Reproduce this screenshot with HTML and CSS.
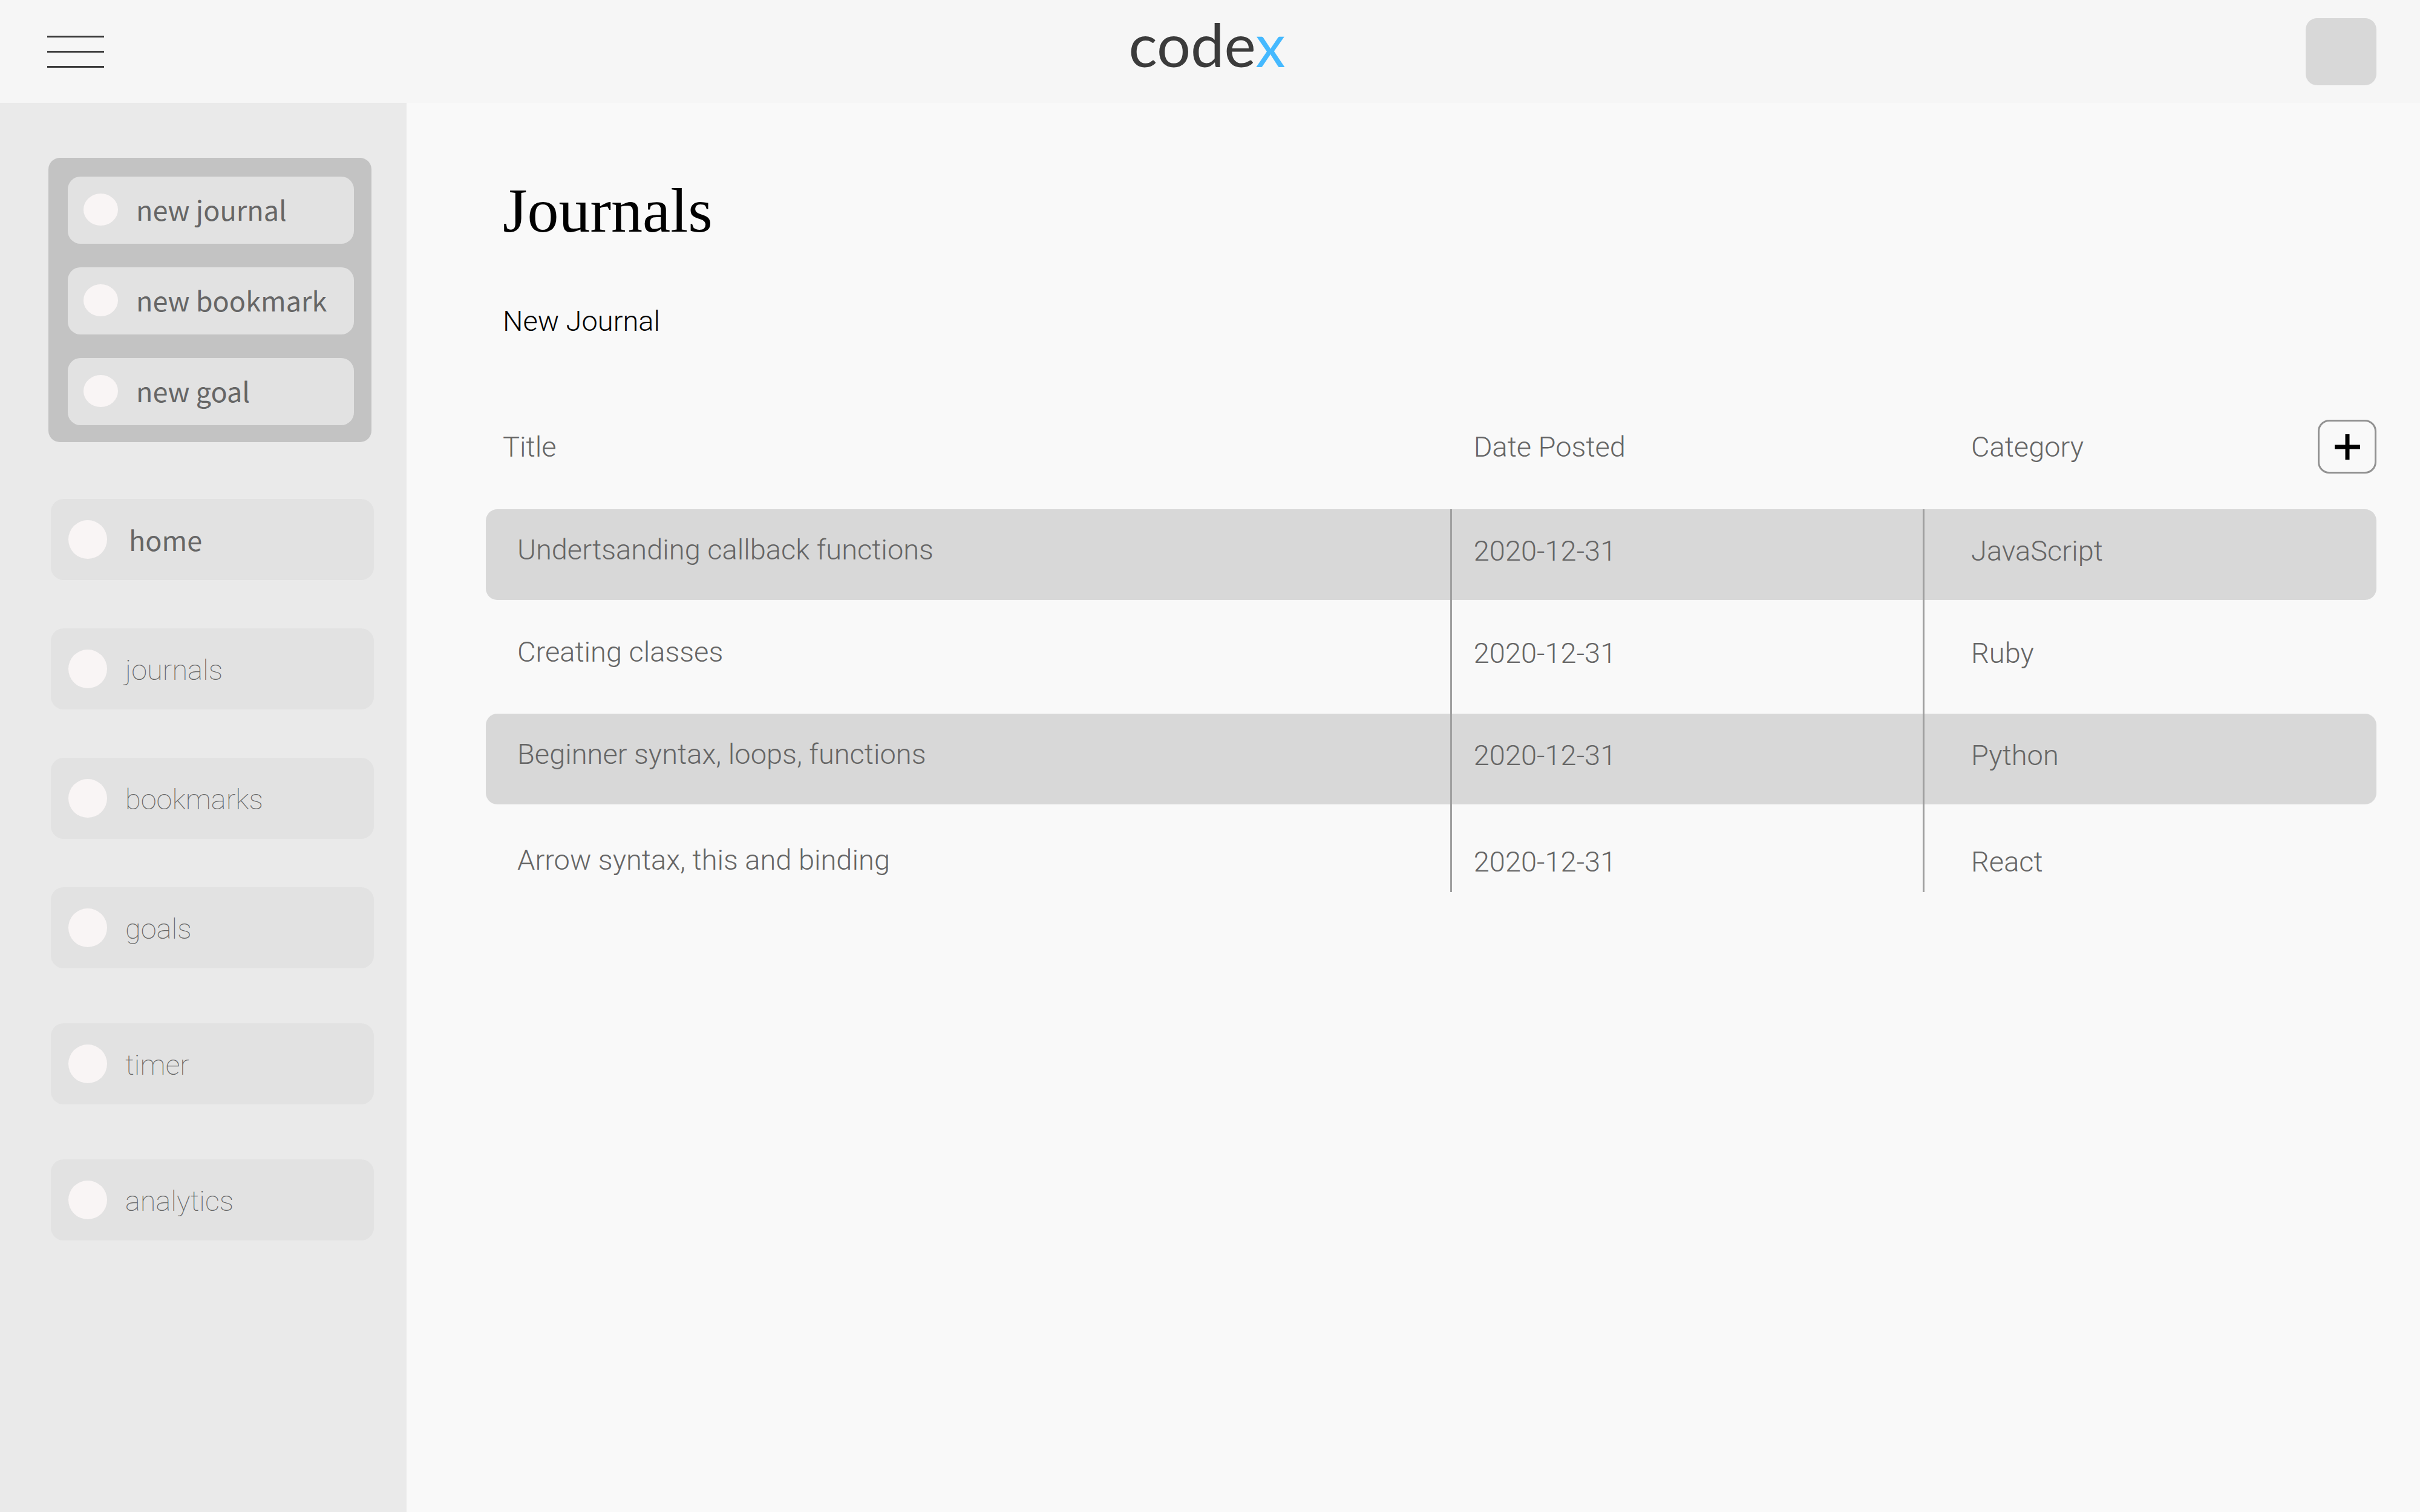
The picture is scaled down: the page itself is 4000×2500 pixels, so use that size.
FILE: index.html
```html
<!DOCTYPE html>
<html lang="en">
<head>
  <meta charset="utf-8">
  <meta name="viewport" content="width=device-width, initial-scale=1">
  <title>codex – Journals</title>
  <link rel="stylesheet" href="styles.css">
</head>
<body>
  <header class="topbar">
    <button class="menu-button" type="button" aria-label="Menu">
      <span class="menu-line"></span>
      <span class="menu-line"></span>
      <span class="menu-line"></span>
    </button>
    <a class="logo" href="#">code<span class="logo-accent">x</span></a>
    <button class="avatar" type="button" aria-label="Account"></button>
  </header>

  <div class="layout">
    <aside class="sidebar">
      <div class="quick-actions">
        <button class="quick-button" type="button"><span class="quick-dot"></span>new journal</button>
        <button class="quick-button" type="button"><span class="quick-dot"></span>new bookmark</button>
        <button class="quick-button" type="button"><span class="quick-dot"></span>new goal</button>
      </div>
      <nav class="nav">
        <a class="nav-item nav-item-current" href="#" aria-current="page"><span class="nav-dot"></span><span class="nav-label">home</span></a>
        <a class="nav-item" href="#"><span class="nav-dot"></span><span class="nav-label">journals</span></a>
        <a class="nav-item" href="#"><span class="nav-dot"></span><span class="nav-label">bookmarks</span></a>
        <a class="nav-item" href="#"><span class="nav-dot"></span><span class="nav-label">goals</span></a>
        <a class="nav-item nav-item-tool" href="#"><span class="nav-dot"></span><span class="nav-label">timer</span></a>
        <a class="nav-item nav-item-tool" href="#"><span class="nav-dot"></span><span class="nav-label">analytics</span></a>
      </nav>
    </aside>

    <main class="content">
      <h1 class="page-title">Journals</h1>
      <a class="new-link" href="#">New Journal</a>

      <table class="journal-table">
        <colgroup>
          <col class="col-title">
          <col class="col-date">
          <col class="col-category">
        </colgroup>
        <thead>
          <tr>
            <th scope="col">Title</th>
            <th scope="col">Date Posted</th>
            <th scope="col">
              <div class="head-with-action">
                Category
                <button class="add-button" type="button" aria-label="Add column">
                  <svg class="add-icon" viewBox="0 0 42 42" aria-hidden="true"><path d="M21 0v42M0 21h42" stroke="#000" stroke-width="7"/></svg>
                </button>
              </div>
            </th>
          </tr>
        </thead>
        <tbody>
          <tr class="row-shaded"><td>Undertsanding callback functions</td><td>2020-12-31</td><td>JavaScript</td></tr>
          <tr class="row-plain"><td>Creating classes</td><td>2020-12-31</td><td>Ruby</td></tr>
          <tr class="row-shaded"><td>Beginner syntax, loops, functions</td><td>2020-12-31</td><td>Python</td></tr>
          <tr class="row-last"><td>Arrow syntax, this and binding</td><td>2020-12-31</td><td>React</td></tr>
        </tbody>
      </table>
    </main>
  </div>
</body>
</html>
```
FILE: styles.css
```css
* {
  box-sizing: border-box;
}

body {
  margin: 0;
  min-height: 100vh;
  display: flex;
  flex-direction: column;
  background: #f9f9f9;
  color: #666;
  font: 300 47px/56px Roboto, sans-serif;
}

a {
  color: inherit;
  text-decoration: none;
}

button {
  margin: 0;
  padding: 0;
  border: 0;
  background: none;
  color: inherit;
  font: inherit;
  cursor: pointer;
}

/* Top bar */

.topbar {
  display: grid;
  grid-template-columns: 1fr auto 1fr;
  align-items: center;
  height: 170px;
  padding: 0 72px 0 62px;
  background: #f6f6f6;
}

.menu-button {
  justify-self: start;
  display: flex;
  flex-direction: column;
  gap: 22px;
  padding: 0 16px;
}

.menu-line {
  width: 94px;
  height: 3px;
  background: #3b3b3b;
}

.logo {
  padding-bottom: 24px;
  color: #3b3b3b;
  font: 400 99px/118px Lato, sans-serif;
}

.logo-accent {
  color: #45b9ff;
}

.avatar {
  justify-self: end;
  width: 117px;
  height: 111px;
  border-radius: 19px;
  background: #d8d8d8;
}

/* Sidebar */

.layout {
  flex: 1;
  display: flex;
}

.sidebar {
  flex: 0 0 672px;
  padding: 91px 54px 91px 80px;
  background: #eaeaea;
}

.quick-actions {
  display: flex;
  flex-direction: column;
  gap: 39px;
  margin-right: 4px;
  padding: 31px 29px 28px 32px;
  border-radius: 19px;
  background: #c3c3c3;
}

.quick-button {
  display: flex;
  align-items: center;
  gap: 30px;
  height: 111px;
  padding: 0 0 3px 26px;
  border-radius: 21px;
  background: #e2e2e2;
  font: 400 45px/56px "Noto Sans CJK SC", sans-serif;
}

.quick-dot {
  width: 57px;
  height: 53px;
  border-radius: 50%;
  background: #f9f5f5;
}

.nav {
  display: flex;
  flex-direction: column;
  gap: 80px;
  margin-top: 94px;
  padding-left: 4px;
}

.nav-item {
  display: flex;
  align-items: center;
  gap: 30px;
  height: 134px;
  padding-left: 29px;
  border-radius: 21px;
  background: #e2e2e2;
  font-size: 47px;
  font-weight: 100;
}

.nav-item-tool {
  margin-top: 11px;
}

.nav-item-current {
  gap: 36px;
  font: 400 45px/56px "Noto Sans CJK SC", sans-serif;
}

.nav-dot {
  width: 64px;
  height: 64px;
  border-radius: 50%;
  background: #f9f5f5;
}

.nav-label {
  padding-top: 4px;
}

.nav-item-current .nav-label {
  padding-top: 0;
}

/* Journal list */

.content {
  flex: 1;
  min-width: 0;
  padding: 118px 72px 121px 131px;
}

.page-title {
  margin: 0 0 95px 28px;
  color: #000;
  font: 400 104px/120px "Liberation Serif", serif;
}

.new-link {
  display: block;
  width: fit-content;
  margin: 0 0 135px 28px;
  color: #000;
}

.journal-table {
  width: 100%;
  table-layout: fixed;
  border-spacing: 0;
}

.col-title {
  width: 51%;
}

.col-date {
  width: 25%;
}

.journal-table th {
  padding: 0 0 59px 28px;
  font-weight: 300;
  text-align: left;
}

.journal-table th:nth-child(2) {
  padding-left: 39px;
}

.journal-table th:nth-child(3) {
  padding-left: 80px;
}

.head-with-action {
  display: flex;
  align-items: center;
  justify-content: space-between;
}

.add-button {
  display: grid;
  place-items: center;
  width: 97px;
  height: 89px;
  border: 3px solid #929292;
  border-radius: 19px;
}

.add-icon {
  width: 42px;
  height: 42px;
}

.journal-table td {
  padding: 0 0 12px 36px;
  border-left: 3px solid #a0a0a0;
}

.journal-table td:first-child {
  padding: 0 0 17px 52px;
  border-left: 0;
}

.journal-table td:last-child {
  padding-left: 77px;
}

.row-shaded {
  height: 150px;
}

.row-shaded td {
  background: #d8d8d8;
}

.row-shaded td:first-child {
  border-radius: 19px 0 0 19px;
}

.journal-table .row-shaded td:last-child {
  padding-left: 80px;
  border-left: 0;
  border-radius: 0 19px 19px 0;
  box-shadow: inset 3px 0 #a0a0a0;
}

.row-plain {
  height: 188px;
}

.row-last {
  height: 145px;
  vertical-align: bottom;
}

.journal-table .row-last td {
  padding-bottom: 22px;
}

.journal-table .row-last td:first-child {
  padding-bottom: 25px;
}
```
